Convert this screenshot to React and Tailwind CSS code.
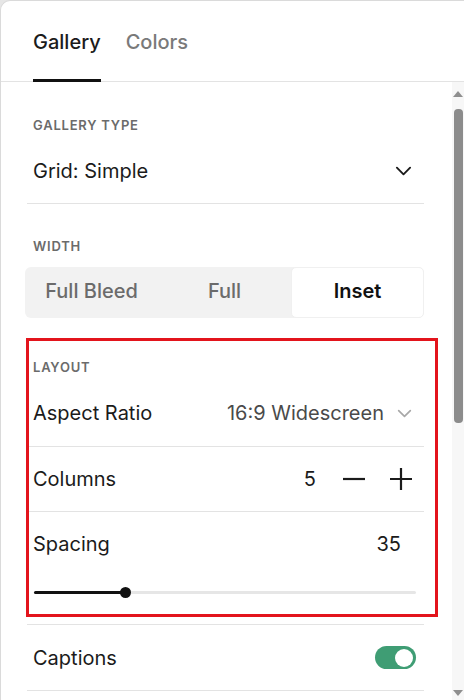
import { useState } from 'react';

const font = { fontFamily: 'Inter, "Noto Sans", sans-serif' };

function Chevron({ className }) {
  return (
    <svg viewBox="0 0 18 10" className={className} fill="none" stroke="currentColor" strokeWidth="2" strokeLinecap="round" strokeLinejoin="round">
      <path d="M2 1.5l7 7 7-7" />
    </svg>
  );
}

function Label({ children }) {
  return (
    <div className="h-[16px] pl-[6px] text-[13px] leading-[16px] font-semibold tracking-[0.06em] text-[#6b6b6b]">
      {children}
    </div>
  );
}

export default function App() {
  const [tab, setTab] = useState('Gallery');
  const [width, setWidth] = useState('Inset');
  const [columns, setColumns] = useState(5);
  const [captions, setCaptions] = useState(true);
  const spacing = 35;

  return (
    <div className="w-[464px] h-[700px] bg-[#e6e6e6] overflow-hidden" style={font}>
      <div className="w-full h-full bg-white rounded-tl-[10px] border-t border-l border-[#dadada] flex flex-col text-[#1b1b1b]">
        {/* Tabs */}
        <div className="h-[81px] shrink-0 border-b border-[#e3e3e3] flex items-end gap-[25px] px-[32px]">
          {['Gallery', 'Colors'].map((t) => (
            <button
              key={t}
              onClick={() => setTab(t)}
              className={
                'h-[80px] -mb-px flex items-center text-[20px] font-medium border-b-[3px] ' +
                (tab === t ? 'border-[#111] text-[#1b1b1b]' : 'border-transparent text-[#7a7a7a]')
              }
            >
              <span className="mt-[3px]">{t}</span>
            </button>
          ))}
        </div>

        <div className="flex flex-1 min-h-0">
          {/* Panel content */}
          <div className="relative flex-1 pl-[26px] pr-[28px]">
            <div className="pt-[35px]">
              <Label>GALLERY TYPE</Label>
              <div className="h-[71px] pt-[6px] flex items-center justify-between pl-[6px] pr-[12px] border-b border-[#e3e3e3] text-[20px]">
                <span>Grid: Simple</span>
                <Chevron className="w-[17px] h-[10px] text-[#1b1b1b]" />
              </div>
            </div>

            <div className="mt-[34px]">
              <Label>WIDTH</Label>
              <div className="mt-[13px] -ml-[2px] h-[51px] bg-[#f2f2f2] rounded-[6px] grid grid-cols-3">
                {['Full Bleed', 'Full', 'Inset'].map((w) => (
                  <button
                    key={w}
                    onClick={() => setWidth(w)}
                    className={
                      'text-[20px] rounded-[5px] pb-[3px] ' +
                      (width === w
                        ? 'bg-white font-semibold text-[#111] border border-[#f0f0f0]'
                        : 'font-medium text-[#6b6b6b]')
                    }
                  >
                    {w}
                  </button>
                ))}
              </div>
            </div>

            <div className="mt-[41px]">
              <Label>LAYOUT</Label>
              <div className="h-[72px] pt-[5px] flex items-center justify-between pl-[6px] pr-[12px] border-b border-[#e3e3e3] text-[20px]">
                <span>Aspect Ratio</span>
                <span className="flex items-center gap-[13px] text-[#4a4a4a]">
                  16:9 Widescreen
                  <Chevron className="w-[15px] h-[9px] text-[#a8a8a8]" />
                </span>
              </div>
              <div className="h-[65px] flex items-center justify-between pl-[6px] pr-[12px] border-b border-[#e3e3e3] text-[20px]">
                <span>Columns</span>
                <div className="flex items-center">
                  <span className="mr-[27px]">{columns}</span>
                  <button onClick={() => setColumns(Math.max(1, columns - 1))} className="w-[22px] h-[22px] mr-[25px] flex items-center justify-center">
                    <svg viewBox="0 0 22 22" className="w-[22px] h-[22px]" stroke="#1b1b1b" strokeWidth="2.2">
                      <path d="M0 11h22" />
                    </svg>
                  </button>
                  <button onClick={() => setColumns(columns + 1)} className="w-[22px] h-[22px] flex items-center justify-center">
                    <svg viewBox="0 0 22 22" className="w-[22px] h-[22px]" stroke="#1b1b1b" strokeWidth="2.2">
                      <path d="M0 11h22M11 0v22" />
                    </svg>
                  </button>
                </div>
              </div>
              <div className="h-[112px]">
                <div className="h-[64px] flex items-center justify-between pl-[6px] pr-[23px] text-[20px]">
                  <span>Spacing</span>
                  <span>{spacing}</span>
                </div>
                <div className="relative ml-[7px] mr-[8px] mt-[15px] h-[3px] bg-[#e6e6e6] rounded-full">
                  <div className="h-[3px] w-[91px] bg-[#111] rounded-full" />
                  <div className="absolute left-[86px] -top-[4px] w-[11px] h-[11px] rounded-full bg-[#111]" />
                </div>
              </div>
              <div className="h-[67px] flex items-center justify-between pl-[6px] pr-[8px] border-y border-[#e3e3e3] text-[20px]">
                <span>Captions</span>
                <button
                  onClick={() => setCaptions(!captions)}
                  className={
                    'w-[41px] h-[23px] rounded-full flex items-center px-[3px] ' +
                    (captions ? 'bg-[#3f9d74] justify-end' : 'bg-[#cfcfcf] justify-start')
                  }
                >
                  <span className="w-[18px] h-[18px] rounded-full bg-white" />
                </button>
              </div>
            </div>

            {/* highlight box */}
            <div className="absolute left-[25px] top-[256px] w-[412px] h-[279px] border-[3px] border-[#e3141c] pointer-events-none" />
          </div>

          {/* Scrollbar */}
          <div className="w-[12px] shrink-0 bg-[#f7f7f7] flex flex-col items-center pt-[9px]">
            <svg viewBox="0 0 10 6" className="w-[10px] h-[6px]" fill="#8f8f8f">
              <path d="M5 0l5 6H0z" />
            </svg>
            <div className="mt-[12px] w-[9px] h-[314px] rounded-[4px] bg-[#8c8c8c]" />
            <div className="flex-1" />
            <svg viewBox="0 0 10 6" className="w-[10px] h-[6px] mb-[4px]" fill="#8f8f8f">
              <path d="M0 0h10L5 6z" />
            </svg>
          </div>
        </div>
      </div>
    </div>
  );
}
